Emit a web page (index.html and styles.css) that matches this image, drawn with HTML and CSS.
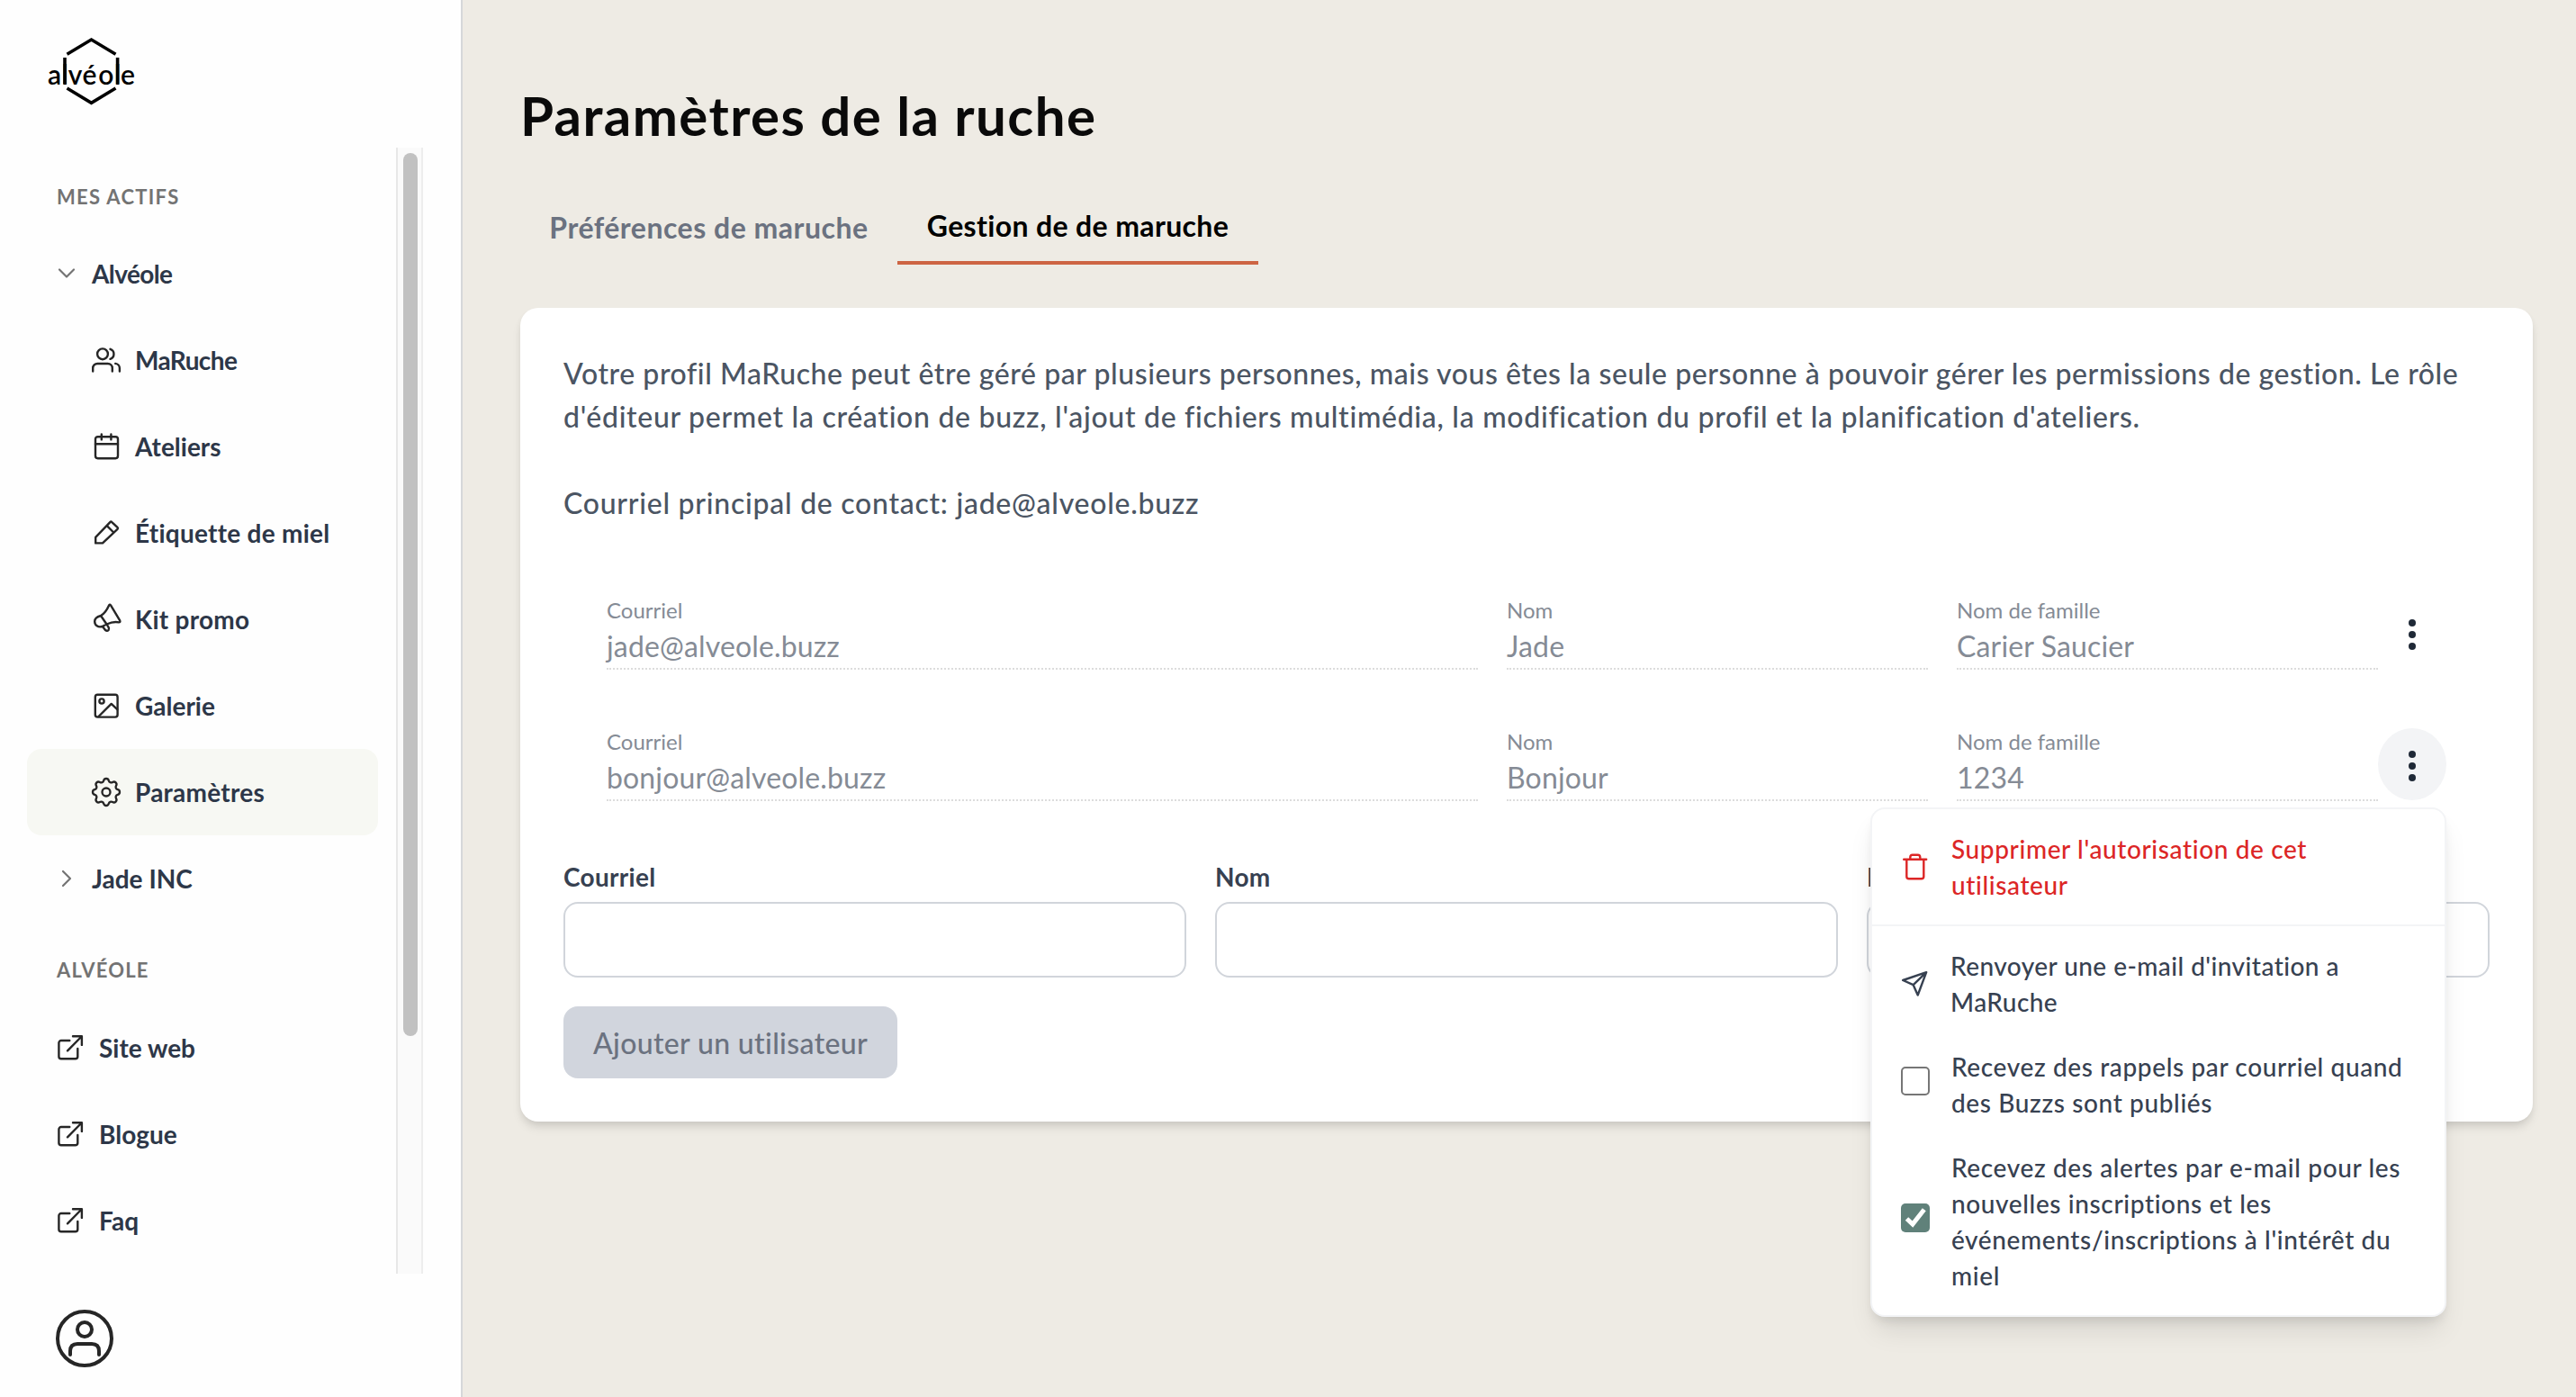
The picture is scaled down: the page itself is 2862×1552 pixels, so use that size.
FILE: index.html
```html
<!DOCTYPE html>
<html lang="fr">
<head>
  <meta charset="UTF-8">
  <meta name="viewport" content="width=device-width, initial-scale=1.0">
  <title>Paramètres de la ruche | Alvéole</title>
  <link rel="stylesheet" href="styles.css">
</head>
<body>
  <!-- Shared icons -->
  <svg class="sprite">
    <symbol id="external" viewBox="0 0 32 32">
      <path d="M15.3 8H6a2.6 2.6 0 0 0-2.6 2.6v15.1A2.6 2.6 0 0 0 6 28.3h15.7a2.6 2.6 0 0 0 2.6-2.6V17M13 19.3 28.6 3.5M19 3.3h9.9v9.6"/>
    </symbol>
    <symbol id="dots" viewBox="0 0 40 40">
      <circle cx="20" cy="7" r="4"/><circle cx="20" cy="20" r="4"/><circle cx="20" cy="33" r="4"/>
    </symbol>
  </svg>

  <!-- Sidebar -->
  <aside class="sidebar">
    <div class="logo">
      <svg width="104" height="80" viewBox="50 40 104 80">
        <path d="M74.5 60.3 101.5 44l27 16.3M74.5 98l27 16.3 27-16.3M72 64v29.5M130.6 64v29.5"/>
        <text x="53 68.4 75.8 91.4 109.2 127 134" y="93.5">alvéole</text>
      </svg>
    </div>

    <div class="nav-scroll">
      <nav class="nav">
        <h2 class="nav-title">MES ACTIFS</h2>
        <a class="nav-item">
          <svg class="chevron" viewBox="0 0 24 24"><path d="M4 7.5l8 8 8-8"/></svg>
          <span class="tight">Alvéole</span>
        </a>
        <a class="nav-item sub">
          <svg class="icon" viewBox="0 0 32 32"><circle cx="12" cy="9.3" r="5.9"/><path d="M1.2 28.5V25a5 5 0 0 1 5-5h11.6a5 5 0 0 1 5 5v3.5M20.5 3.8a5.8 5.8 0 0 1 0 11M26.2 19.9a5.2 5.2 0 0 1 4.7 5.1v3.5"/></svg>
          <span class="tight">MaRuche</span>
        </a>
        <a class="nav-item sub">
          <svg class="icon" viewBox="0 0 32 32"><rect x="4" y="5.2" width="25" height="24" rx="2.6"/><path d="M4 13.2h25M10.8 2.4v6M21.4 2.4v6"/></svg>
          <span>Ateliers</span>
        </a>
        <a class="nav-item sub">
          <svg class="icon" viewBox="0 0 32 32"><path d="M4.2 27.4v-6.6L20.3 4.1q1-1 2 0l6.2 5.8q1 1 0 2L12 27.4zM16.8 8.2l7.4 7.3"/></svg>
          <span class="loose">Étiquette de miel</span>
        </a>
        <a class="nav-item sub">
          <svg class="icon" viewBox="0 0 32 32"><path d="M10 12C15 9 17.5 4 19.1.4q.9-1.3 1.9 0l10.2 17q.8 2-1.2 2C26 18.5 21 19.5 16.5 21.5L11.5 24C7 25.5 3.2 22.5 3.2 18.5 3.2 15 6 13 10 12zL16.5 21.5M12 24l3 4q2 1.6 3.6 0 1-1.5 0-3l-2-3.6"/></svg>
          <span class="loose">Kit promo</span>
        </a>
        <a class="nav-item sub">
          <svg class="icon" viewBox="0 0 32 32"><rect x="3.8" y="3.8" width="24.8" height="24.8" rx="2.6"/><circle cx="11" cy="11" r="2.6"/><path d="M7.5 28 21.7 13.9l6.6 6.3"/></svg>
          <span>Galerie</span>
        </a>
        <a class="nav-item sub active">
          <svg class="icon gear" viewBox="2.4 2.4 19.2 19.2"><path d="M10.325 4.317c.426-1.756 2.924-1.756 3.35 0a1.724 1.724 0 002.573 1.066c1.543-.94 3.31.826 2.37 2.37a1.724 1.724 0 001.065 2.572c1.756.426 1.756 2.924 0 3.35a1.724 1.724 0 00-1.066 2.573c.94 1.543-.826 3.31-2.37 2.37a1.724 1.724 0 00-2.572 1.065c-.426 1.756-2.924 1.756-3.35 0a1.724 1.724 0 00-2.573-1.066c-1.543.94-3.31-.826-2.37-2.37a1.724 1.724 0 00-1.065-2.572c-1.756-.426-1.756-2.924 0-3.35a1.724 1.724 0 001.066-2.573c-.94-1.543.826-3.31 2.37-2.37.996.608 2.296.07 2.572-1.065z"/><circle cx="12" cy="12" r="2.7"/></svg>
          <span class="loose">Paramètres</span>
        </a>
        <a class="nav-item">
          <svg class="chevron" viewBox="0 0 24 24"><path d="M8 4l8 8-8 8"/></svg>
          <span>Jade INC</span>
        </a>

        <h2 class="nav-title second">ALVÉOLE</h2>
        <a class="nav-item link"><svg class="icon"><use href="#external"/></svg><span>Site web</span></a>
        <a class="nav-item link"><svg class="icon"><use href="#external"/></svg><span>Blogue</span></a>
        <a class="nav-item link"><svg class="icon"><use href="#external"/></svg><span>Faq</span></a>
      </nav>
      <div class="scrollbar"><div class="thumb"></div></div>
    </div>

    <svg class="user" viewBox="0 0 64 64"><circle cx="32" cy="32" r="30"/><circle cx="32" cy="22" r="8"/><path d="M16 50v-4q0-8 8-8h16q8 0 8 8v4"/></svg>
  </aside>

  <!-- Page content -->
  <main class="content">
    <h1>Paramètres de la ruche</h1>

    <div class="tabs">
      <button class="tab">Préférences de maruche</button>
      <button class="tab selected">Gestion de de maruche</button>
    </div>

    <section class="card">
      <div class="intro">
        <p>Votre profil MaRuche peut être géré par plusieurs personnes, mais vous êtes la seule personne à pouvoir gérer les permissions de gestion. Le rôle</p>
        <p class="roles">d'éditeur permet la création de buzz, l'ajout de fichiers multimédia, la modification du profil et la planification d'ateliers.</p>
        <p class="contact">Courriel principal de contact: jade@alveole.buzz</p>
      </div>

      <div class="members">
        <div class="member">
          <div class="field wide"><span class="label">Courriel</span><span class="value">jade@alveole.buzz</span></div>
          <div class="field"><span class="label">Nom</span><span class="value">Jade</span></div>
          <div class="field last"><span class="label">Nom de famille</span><span class="value">Carier Saucier</span></div>
          <button class="more"><svg><use href="#dots"/></svg></button>
        </div>
        <div class="member">
          <div class="field wide"><span class="label">Courriel</span><span class="value">bonjour@alveole.buzz</span></div>
          <div class="field"><span class="label">Nom</span><span class="value">Bonjour</span></div>
          <div class="field last"><span class="label">Nom de famille</span><span class="value">1234</span></div>
          <button class="more open"><svg><use href="#dots"/></svg></button>

          <!-- Dropdown menu -->
          <div class="menu">
            <div class="menu-group">
              <div class="menu-item danger">
                <svg viewBox="0 0 32 32"><path d="M3.2 7.7h25M6.3 7.7v19q0 2.6 2.6 2.6h13.8q2.6 0 2.6-2.6v-19M10.3 7.7V5.4q0-2.6 2.6-2.6h5.8q2.6 0 2.6 2.6v2.3"/></svg>
                <span>Supprimer l'autorisation de cet<br>utilisateur</span>
              </div>
            </div>
            <div class="menu-group">
              <div class="menu-item invite">
                <svg viewBox="0 0 32 32"><path d="M28.2 3.2 2.2 12l11.5 5.2 5 11.3zL13.7 17.2"/></svg>
                <span>Renvoyer une e-mail d'invitation a<br>MaRuche</span>
              </div>
              <label class="menu-item">
                <span class="checkbox"></span>
                <span>Recevez des rappels par courriel quand<br>des Buzzs sont publiés</span>
              </label>
              <label class="menu-item">
                <span class="checkbox checked"><svg viewBox="0 0 32 32"><path d="M6.5 17 13 23 25.8 6.8"/></svg></span>
                <span>Recevez des alertes par e-mail pour les<br>nouvelles inscriptions et les<br>événements/inscriptions à l'intérêt du<br>miel</span>
              </label>
            </div>
          </div>
        </div>
      </div>

      <form class="add-form">
        <div class="inputs">
          <label>Courriel<input type="text"></label>
          <label>Nom<input type="text"></label>
          <label>Nom de famille<input type="text"></label>
        </div>
        <button class="submit" type="button" disabled>Ajouter un utilisateur</button>
      </form>
    </section>
  </main>
</body>
</html>
```
FILE: styles.css
```css
* {
  box-sizing: border-box;
}
body {
  margin: 0;
  display: flex;
  height: 1552px;
  overflow: hidden;
  font-family: Lato, "Open Sans", sans-serif;
  font-size: 32px;
  background-color: #eeebe4;
}
h1, h2, p {
  margin: 0;
}
button {
  font-family: inherit;
  border: none;
  background: none;
  padding: 0;
}
svg {
  display: block;
  fill: none;
  stroke-linecap: round;
  stroke-linejoin: round;
}
.sprite {
  position: absolute;
  width: 0;
  height: 0;
}

/* Sidebar */
.sidebar {
  width: 514px;
  flex-shrink: 0;
  background-color: #fefefe;
  border-right: 2px solid #d6d7da;
}
.logo {
  height: 164px;
  padding: 40px 0 0 50px;
}
.logo path {
  stroke: #000;
  stroke-width: 3.6;
  stroke-linecap: butt;
  stroke-linejoin: miter;
}
.logo text {
  font-size: 30px;
  font-weight: 600;
  fill: #000;
}
.nav-scroll {
  display: flex;
  justify-content: space-between;
  width: 470px;
  height: 1251px;
  padding-left: 30px;
}
.nav {
  width: 390px;
  padding-top: 39px;
}
.nav-title {
  padding-left: 33px;
  margin-bottom: 21px;
  font-size: 22px;
  line-height: 32px;
  font-weight: 700;
  letter-spacing: 1.3px;
  color: #737373;
}
.nav-title.second {
  margin-top: 38px;
  margin-bottom: 22px;
  letter-spacing: 1.2px;
}
.nav-item {
  display: flex;
  align-items: center;
  gap: 16px;
  height: 96px;
  padding-left: 32px;
  border-radius: 16px;
  font-size: 28px;
  font-weight: 700;
  color: #2d3748;
}
.nav-item.sub {
  padding-left: 72px;
}
.nav-item.active {
  background-color: #f7f8f3;
}
.nav-item .tight {
  letter-spacing: -0.6px;
}
.nav-item .loose {
  letter-spacing: 0.25px;
}
.chevron {
  width: 24px;
  height: 24px;
  stroke: #737373;
  stroke-width: 2.2;
}
.icon {
  width: 32px;
  height: 32px;
  overflow: visible;
  stroke: #262626;
  stroke-width: 2.4;
}
.icon.gear {
  stroke-width: 1.4;
}
.scrollbar {
  width: 30px;
  padding: 6px;
  background-color: #fafafa;
  border-left: 2px solid #e8e8e8;
  border-right: 2px solid #ededed;
}
.thumb {
  width: 16px;
  height: 981px;
  border-radius: 8px;
  background-color: #c1c1c1;
}
.user {
  width: 64px;
  height: 64px;
  margin: 40px 0 0 62px;
  stroke: #262626;
  stroke-width: 4;
}

/* Content */
.content {
  flex: 1;
  padding: 92px 48px 0 64px;
}
h1 {
  font-size: 60px;
  line-height: 72px;
  letter-spacing: 1.4px;
  color: #0a0a0a;
}
.tabs {
  display: flex;
  height: 84px;
  margin: 46px 0 48px;
}
.tab {
  width: 419px;
  padding-top: 2px;
  font-size: 32px;
  line-height: 48px;
  font-weight: 700;
  letter-spacing: 0.5px;
  color: #6b7280;
}
.tab.selected {
  width: 401px;
  letter-spacing: 0.35px;
  color: #000;
  border-bottom: 4px solid #cd6443;
}
.card {
  height: 904px;
  padding: 48px;
  border-radius: 20px;
  background-color: #fff;
  box-shadow: 0 8px 12px -2px rgba(0, 0, 0, 0.1), 0 4px 8px -2px rgba(0, 0, 0, 0.08);
}
.intro {
  padding-top: 1px;
  line-height: 48px;
  font-weight: 500;
  letter-spacing: 0.56px;
  color: #4b5563;
  white-space: nowrap;
}
.roles {
  letter-spacing: 0.7px;
}
.contact {
  margin-top: 48px;
  letter-spacing: 0.73px;
}

/* Members */
.members {
  display: flex;
  flex-direction: column;
  gap: 64px;
  margin: 79px 48px 64px;
}
.member {
  position: relative;
  display: flex;
  align-items: center;
  height: 82px;
  color: #858b95;
}
.field {
  width: 468px;
  margin-right: 32px;
  border-bottom: 2px dotted #dcdcdc;
}
.field.wide {
  width: 968px;
}
.field.last {
  margin-right: 0;
}
.field .label {
  display: block;
  font-size: 24px;
  line-height: 32px;
}
.field .value {
  display: block;
  line-height: 48px;
  letter-spacing: 0.15px;
}
.more {
  width: 76px;
  height: 80px;
  border-radius: 50%;
}
.more svg {
  width: 40px;
  height: 40px;
  margin: 4px auto 0;
  fill: #1f2937;
}
.more.open {
  background-color: #f3f4f6;
}

/* Dropdown menu */
.menu {
  position: absolute;
  top: 89px;
  right: 0;
  z-index: 1;
  width: 640px;
  border: 2px solid #f3f4f6;
  border-radius: 16px;
  background-color: #fff;
  box-shadow: 0 20px 30px -6px rgba(0, 0, 0, 0.1), 0 8px 12px -4px rgba(0, 0, 0, 0.1);
}
.menu-group {
  display: flex;
  flex-direction: column;
  gap: 32px;
  padding: 24px 32px;
}
.menu-group + .menu-group {
  border-top: 2px solid #f3f4f6;
}
.menu-item {
  display: flex;
  align-items: center;
  gap: 24px;
  font-size: 28px;
  line-height: 40px;
  font-weight: 500;
  letter-spacing: 0.62px;
  white-space: nowrap;
  color: #374151;
}
.menu-item svg {
  width: 32px;
  height: 32px;
  stroke: currentColor;
  stroke-width: 2.4;
}
.menu-item.danger {
  color: #dc2626;
}
.menu-item.invite {
  gap: 23px;
  letter-spacing: 0.44px;
}
.checkbox {
  width: 32px;
  height: 32px;
  margin-bottom: 8px;
  border: 2px solid #767676;
  border-radius: 5px;
}
.checkbox.checked {
  border: none;
  background-color: #60817a;
}
.checkbox svg {
  stroke: #fff;
  stroke-width: 5;
  stroke-linecap: butt;
  stroke-linejoin: miter;
}

/* Add user form */
.inputs {
  display: flex;
  gap: 32px;
}
.inputs label {
  flex: 1;
  font-size: 28px;
  line-height: 40px;
  font-weight: 700;
  letter-spacing: 0.3px;
  color: #374151;
}
.inputs input {
  display: block;
  width: 100%;
  height: 84px;
  margin-top: 8px;
  border: 2px solid #d1d5db;
  border-radius: 16px;
  background-color: #fff;
}
.submit {
  display: block;
  width: 371px;
  height: 80px;
  margin-top: 32px;
  border-radius: 16px;
  font-size: 32px;
  font-weight: 500;
  letter-spacing: 0.35px;
  color: #6b7280;
  background-color: #d1d5dd;
}
```
